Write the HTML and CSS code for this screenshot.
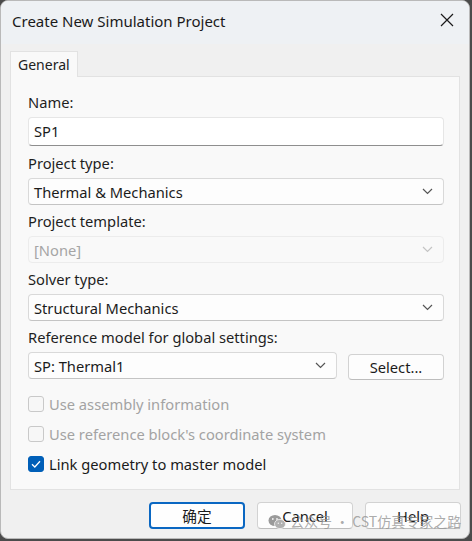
FILE: index.html
```html
<!DOCTYPE html>
<html>
<head>
<meta charset="utf-8">
<link rel="stylesheet" href="styles.css">
</head>
<body>
<div class="dialog">
  <div class="titlebar">
    <span class="title">Create New Simulation Project</span>
    <svg class="close" width="14" height="14" viewBox="0 0 14 14"><path d="M1 1L13 13M13 1L1 13" stroke="#1a1a1a" stroke-width="1.2" fill="none"/></svg>
  </div>
  <div class="tabs"><div class="tab">General</div></div>
  <div class="panel">
    <div class="label">Name:</div>
    <div class="input">SP1</div>
    <div class="label">Project type:</div>
    <div class="select"><span>Thermal &amp; Mechanics</span><svg class="chev" width="11" height="7" viewBox="0 0 11 7"><path d="M1 1L5.5 5.5L10 1" stroke="#555" stroke-width="1.2" fill="none"/></svg></div>
    <div class="label">Project template:</div>
    <div class="select disabled"><span>[None]</span><svg class="chev" width="11" height="7" viewBox="0 0 11 7"><path d="M1 1L5.5 5.5L10 1" stroke="#c4c4c4" stroke-width="1.2" fill="none"/></svg></div>
    <div class="label">Solver type:</div>
    <div class="select"><span>Structural Mechanics</span><svg class="chev" width="11" height="7" viewBox="0 0 11 7"><path d="M1 1L5.5 5.5L10 1" stroke="#555" stroke-width="1.2" fill="none"/></svg></div>
    <div class="label">Reference model for global settings:</div>
    <div class="refrow">
      <div class="select grow"><span>SP: Thermal1</span><svg class="chev" width="11" height="7" viewBox="0 0 11 7"><path d="M1 1L5.5 5.5L10 1" stroke="#555" stroke-width="1.2" fill="none"/></svg></div>
      <div class="btn selectbtn">Select...</div>
    </div>
    <div class="checks">
      <div class="check off"><span class="box"></span><span>Use assembly information</span></div>
      <div class="check off"><span class="box"></span><span>Use reference block's coordinate system</span></div>
      <div class="check on"><span class="box"><svg width="16" height="16" viewBox="0 0 16 16"><path d="M4 8.3L6.8 11L12 5.2" stroke="#fff" stroke-width="1.3" fill="none"/></svg></span><span>Link geometry to master model</span></div>
    </div>
  </div>
  <div class="footer">
    <div class="btn dbtn primary">确定</div>
    <div class="btn dbtn">Cancel</div>
    <div class="btn dbtn">Help</div>
  </div>
  <div class="watermark">
    <svg width="18" height="16" viewBox="0 0 18 16"><ellipse cx="7" cy="6.5" rx="6.5" ry="5.5" fill="#9a9a9a"/><ellipse cx="12" cy="10" rx="5.5" ry="4.6" fill="#b0b0b0" stroke="#f4f4f4" stroke-width="0.8"/><circle cx="4.8" cy="5" r="0.9" fill="#f4f4f4"/><circle cx="9" cy="5" r="0.9" fill="#f4f4f4"/><circle cx="10.3" cy="9.3" r="0.7" fill="#f4f4f4"/><circle cx="13.7" cy="9.3" r="0.7" fill="#f4f4f4"/></svg>
    <span class="wmtext">公众号 · CST仿真专家之路</span>
  </div>
</div>
</body>
</html>
```
FILE: styles.css
```css
html, body {
  margin: 0;
  padding: 0;
}
body {
  width: 472px;
  height: 541px;
  background: #4b4b4b;
  font-family: "Noto Sans", "Noto Sans CJK SC", sans-serif;
  color: #1b1b1b;
  overflow: hidden;
}
.dialog {
  position: relative;
  box-sizing: border-box;
  width: 470px;
  height: 539px;
  background: #f0f0f0;
  border: 1px solid #b9b9b9;
  border-radius: 8px;
  overflow: hidden;
}
.titlebar {
  height: 43px;
  display: flex;
  align-items: center;
  justify-content: space-between;
  padding: 0 15px 0 11px;
  background: #eef1f4;
  box-sizing: border-box;
}
.title {
  font-size: 15px;
  color: #1a1a1a;
  margin-top: -4px;
}
.close {
  margin-top: -6px;
}
.tabs {
  display: flex;
  padding-left: 9px;
  margin-top: 7px;
}
.tab {
  width: 68px;
  height: 26px;
  box-sizing: border-box;
  background: #f9f9f9;
  border: 1px solid #e2e2e2;
  border-bottom: none;
  font-size: 14px;
  padding: 3px 0 0 7px;
  color: #222;
  position: relative;
  z-index: 1;
}
.panel {
  box-sizing: border-box;
  margin: -1px 0 0 9px;
  width: 450px;
  height: 414px;
  background: #f9f9f9;
  border: 1px solid #e2e2e2;
  padding: 16px 15px 0 17px;
  display: flex;
  flex-direction: column;
}
.label {
  font-size: 14.7px;
  line-height: 18px;
  height: 18px;
  margin-bottom: 6px;
  color: #1e1e1e;
}
.input {
  box-sizing: border-box;
  height: 29px;
  background: #ffffff;
  border: 1px solid #e6e6e6;
  border-bottom: 1px solid #8e8e8e;
  border-radius: 4px;
  font-size: 14.7px;
  line-height: 27px;
  padding-left: 5px;
  margin-bottom: 8px;
}
.select {
  box-sizing: border-box;
  height: 27px;
  background: #fdfdfd;
  border: 1px solid #d9d9d9;
  border-bottom-color: #c4c4c4;
  border-radius: 4px;
  font-size: 14.7px;
  display: flex;
  align-items: center;
  justify-content: space-between;
  padding: 0 10px 0 5px;
  margin-bottom: 7px;
}
.select.disabled {
  background: #f9f9f9;
  border-color: #ececec;
  color: #a5a5a5;
}
.refrow {
  display: flex;
  gap: 11px;
  align-items: flex-start;
}
.grow {
  flex: 1;
  margin-bottom: 0;
}
.btn {
  box-sizing: border-box;
  background: #fdfdfd;
  border: 1px solid #d2d2d2;
  border-bottom-color: #bdbdbd;
  border-radius: 4px;
  font-size: 14.7px;
  display: flex;
  align-items: center;
  justify-content: center;
  color: #1b1b1b;
}
.selectbtn {
  width: 96px;
  height: 26px;
  margin-top: 2px;
}
.checks {
  display: flex;
  flex-direction: column;
  gap: 12px;
  margin-top: 15px;
}
.check {
  display: flex;
  align-items: center;
  gap: 5px;
  height: 18px;
  font-size: 14.7px;
}
.box {
  box-sizing: border-box;
  width: 16px;
  height: 16px;
  border-radius: 3px;
  border: 1px solid #c9c9c9;
  background: #f7f7f7;
  display: flex;
}
.check.off {
  color: #a3a3a3;
}
.check.on .box {
  background: #005fb8;
  border-color: #005fb8;
}
.check.on .box svg {
  margin: -1px;
}
.footer {
  display: flex;
  justify-content: flex-end;
  gap: 12px;
  padding: 12px 8px 0 0;
}
.dbtn {
  width: 96px;
  height: 27px;
}
.primary {
  border: 2px solid #0a67c2;
  background: #fefefe;
}
.watermark {
  position: absolute;
  left: 267px;
  top: 510px;
  display: flex;
  align-items: center;
  gap: 4px;
  white-space: nowrap;
  font-family: "Noto Sans CJK SC", sans-serif;
  font-size: 14px;
  line-height: 18px;
  color: rgba(150, 150, 150, 0.8);
}
.watermark svg {
  margin-top: 3px;
}
```
